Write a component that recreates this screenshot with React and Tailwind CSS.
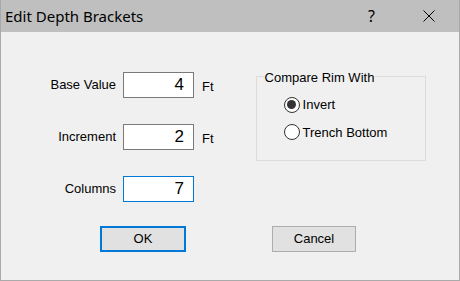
const Field = ({ label, value, unit, focused }) => (
  <div className="flex h-[26px] items-center">
    <div className="w-[117px] pr-[7px] text-right text-[13px] text-black">{label}</div>
    <div
      className={`flex h-[26px] w-[71px] items-center justify-end border bg-white pr-[9px] text-[17px] text-black ${
        focused ? "border-[#0078d7]" : "border-[#7a7a7a]"
      }`}
    >
      {value}
    </div>
    {unit && <div className="ml-[8px] mt-[4px] text-[13px] text-black">{unit}</div>}
  </div>
);

const Radio = ({ label, checked }) => (
  <div className="flex items-center gap-[3px] text-[13px] text-black">
    <div className="flex h-[16px] w-[16px] items-center justify-center rounded-full border border-[#333] bg-white">
      {checked && <div className="h-[9px] w-[9px] rounded-full bg-[#333]" />}
    </div>
    <span>{label}</span>
  </div>
);

const App = () => {
  return (
    <div
      className="flex h-[281px] w-[460px] flex-col border border-t-0 border-[#aaaaaa] bg-[#f0f0f0]"
      style={{ fontFamily: '"Liberation Sans", Arial, sans-serif' }}
    >
      <div className="flex h-[32px] shrink-0 items-center bg-[#bfbfbf] pl-[4px]">
        <span className="text-[15px] text-black" style={{ fontFamily: '"Noto Sans", sans-serif' }}>
          Edit Depth Brackets
        </span>
        <span className="ml-auto mr-[48px] text-[16px] text-black" style={{ fontFamily: '"Noto Sans", sans-serif' }}>
          ?
        </span>
        <svg width="12" height="12" viewBox="0 0 12 12" className="mr-[24px]">
          <path d="M0.5 0.5 L11.5 11.5 M11.5 0.5 L0.5 11.5" stroke="#000" strokeWidth="1" />
        </svg>
      </div>

      <div className="flex pl-[5px] pt-[40px]">
        <div className="flex flex-col gap-[26px]">
          <Field label="Base Value" value="4" unit="Ft" />
          <Field label="Increment" value="2" unit="Ft" />
          <Field label="Columns" value="7" focused />
        </div>

        <div className="relative ml-[42px] mt-[4px] h-[85px] w-[170px] border border-[#dcdcdc]">
          <span className="absolute -top-[9px] left-[7px] bg-[#f0f0f0] px-[1px] text-[13px] text-black">
            Compare Rim With
          </span>
          <div className="flex flex-col gap-[8px] pl-[27px] pt-[18px]">
            <Radio label="Invert" checked />
            <Radio label="Trench Bottom" />
          </div>
        </div>
      </div>

      <div className="flex pl-[99px] pt-[24px]">
        <div className="flex h-[26px] w-[86px] items-center justify-center border-2 border-[#0078d7] bg-[#e1e1e1] text-[13px] text-black">
          OK
        </div>
        <div className="ml-[86px] flex h-[26px] w-[84px] items-center justify-center border border-[#adadad] bg-[#e1e1e1] text-[13px] text-black">
          Cancel
        </div>
      </div>
    </div>
  );
};

export default App;
